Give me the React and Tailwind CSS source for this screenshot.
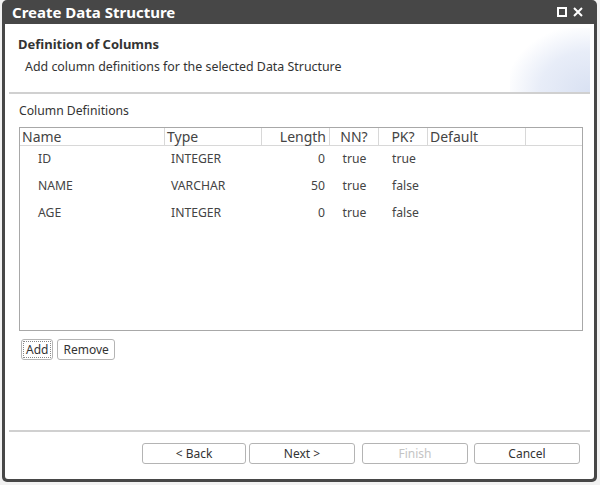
const rows = [
  { name: 'ID', type: 'INTEGER', length: '0', nn: 'true', pk: 'true' },
  { name: 'NAME', type: 'VARCHAR', length: '50', nn: 'true', pk: 'false' },
  { name: 'AGE', type: 'INTEGER', length: '0', nn: 'true', pk: 'false' },
]

function WizButton({ children, disabled, className = '' }) {
  return (
    <button
      className={
        'h-[21px] rounded-[3px] border border-[#b4b4b4] bg-white text-[12px] leading-none ' +
        (disabled ? 'text-[#c4c4c4] ' : 'text-[#333] ') +
        className
      }
    >
      {children}
    </button>
  )
}

export default function App() {
  return (
    <div
      className="w-[600px] h-[485px] bg-[#f2f2f2] overflow-hidden"
      style={{ fontFamily: '"Noto Sans", "Open Sans", sans-serif' }}
    >
      <div className="ml-[2px] w-[595px] h-[482px] rounded-[5px] bg-[#474747] flex flex-col overflow-hidden">
        <div className="h-[24px] flex items-center justify-between pl-[10px] pr-[14px] shrink-0">
          <span className="text-white font-bold text-[15px] leading-none">Create Data Structure</span>
          <div className="flex items-center gap-[6px] text-white">
            <svg width="10" height="10" viewBox="0 0 10 10">
              <rect x="1" y="1" width="8" height="8" fill="none" stroke="white" strokeWidth="2" />
            </svg>
            <svg width="10" height="10" viewBox="0 0 10 10">
              <path d="M1 1 L9 9 M9 1 L1 9" stroke="white" strokeWidth="2" />
            </svg>
          </div>
        </div>
        <div className="mx-[3px] mb-[3px] flex-1 bg-white rounded-b-[3px] flex flex-col">
          <div className="relative h-[68px] mx-[4px] overflow-hidden">
            <div className="absolute right-0 top-[4px] w-[80px] h-[64px] bg-[radial-gradient(ellipse_at_bottom_right,#d9e1f2_0%,#e8edf8_45%,#ffffff_75%)]" />
            <div className="relative pl-[9px] pt-[11px]">
              <div className="text-[13px] font-bold text-[#333] leading-[18px]">Definition of Columns</div>
              <div className="mt-[6px] pl-[7px] text-[12.4px] text-[#333] leading-[16px]">
                Add column definitions for the selected Data Structure
              </div>
            </div>
          </div>
          <div className="mx-[4px] h-[2px] bg-[#d0d0d0]" />
          <div className="px-[14px] pt-[9px] flex flex-col">
            <div className="text-[12.2px] text-[#333] leading-[16px]">Column Definitions</div>
            <div className="mt-[8px] w-[564px] h-[204px] border border-[#a8a8a8] bg-white">
              <div className="flex h-[18px] border-b border-[#d8d8d8] text-[14px] text-[#444] leading-[17px]">
                <div className="w-[145px] pl-[2px] border-r border-[#d8d8d8]">Name</div>
                <div className="w-[97px] pl-[2px] border-r border-[#d8d8d8]">Type</div>
                <div className="w-[68px] pr-[3px] text-right border-r border-[#d8d8d8]">Length</div>
                <div className="w-[49px] text-center border-r border-[#d8d8d8]">NN?</div>
                <div className="w-[49px] text-center border-r border-[#d8d8d8]">PK?</div>
                <div className="w-[98px] pl-[2px] border-r border-[#d8d8d8]">Default</div>
              </div>
              {rows.map((r) => (
                <div key={r.name} className="flex h-[27px] items-center text-[12.2px] text-[#444]">
                  <div className="w-[145px] pl-[18px]">{r.name}</div>
                  <div className="w-[97px] pl-[6px]">{r.type}</div>
                  <div className="w-[68px] pr-[5px] text-right">{r.length}</div>
                  <div className="w-[49px] text-center">{r.nn}</div>
                  <div className="w-[49px] pl-[13px]">{r.pk}</div>
                </div>
              ))}
            </div>
            <div className="mt-[8px] flex gap-[4px] pl-[2px]">
              <button className="h-[21px] px-[4px] rounded-[3px] border border-[#b4b4b4] bg-white text-[12px] text-[#333] leading-none outline outline-1 outline-dotted outline-[#888] -outline-offset-[3px]">
                Add
              </button>
              <button className="h-[21px] px-[5px] rounded-[3px] border border-[#b4b4b4] bg-white text-[12px] text-[#333] leading-none">
                Remove
              </button>
            </div>
          </div>
          <div className="flex-1" />
          <div className="mx-[4px] h-[2px] bg-[#d0d0d0]" />
          <div className="flex justify-end pr-[14px] pt-[11px] pb-[15px]">
            <WizButton className="w-[104px]">&lt; Back</WizButton>
            <WizButton className="ml-[3px] w-[106px]">Next &gt;</WizButton>
            <WizButton disabled className="ml-[7px] w-[106px]">Finish</WizButton>
            <WizButton className="ml-[6px] w-[106px]">Cancel</WizButton>
          </div>
        </div>
      </div>
    </div>
  )
}
